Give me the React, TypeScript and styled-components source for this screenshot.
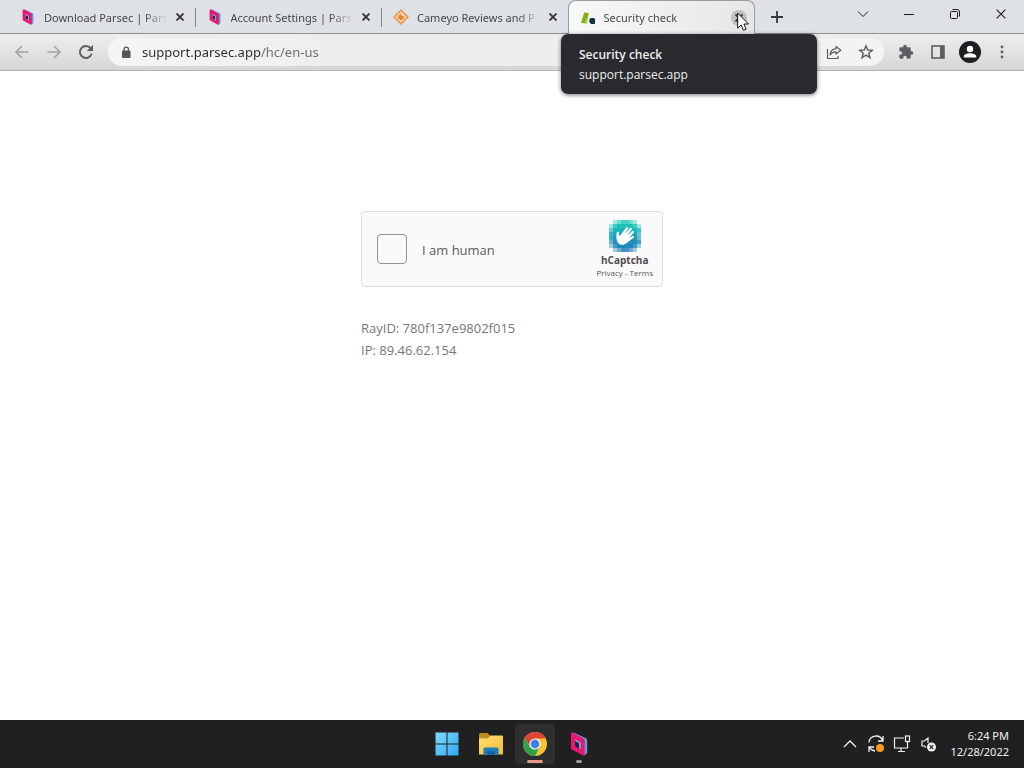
import React from "react";
import styled, { createGlobalStyle } from "styled-components";

const GlobalStyle = createGlobalStyle`
  *, *::before, *::after { box-sizing: border-box; }
  body {
    margin: 0;
    background: #fff;
    font-family: "Open Sans", "Noto Sans", sans-serif;
    font-size: 13px;
    color: #3c4043;
  }
  button, input { font: inherit; color: inherit; }
  svg { display: block; }
`;

const Screen = styled.div`
  min-height: 100vh;
  display: flex;
  flex-direction: column;
`;

const TabStrip = styled.header`
  position: relative;
  display: flex;
  height: 34px;
  padding-left: 8px;
  background: #dee1e6;
  border-bottom: 1px solid #8f8c90;
`;

const TabList = styled.div`
  display: flex;
  flex: 0 1 747px;
  min-width: 0;
`;

const TabItem = styled.div<{ $active?: boolean; $divided?: boolean }>`
  position: relative;
  display: flex;
  align-items: center;
  flex: 1 1 0;
  min-width: 0;
  height: 34px;
  padding: 0 7px 0 ${(p) => (p.$active ? 11 : 12)}px;
  border: 1px solid ${(p) => (p.$active ? "#9b9c9f" : "transparent")};
  border-width: ${(p) => (p.$active ? "1px 1px 0" : "0")};
  border-radius: 8px 8px 0 0;
  background: ${(p) => (p.$active ? "linear-gradient(100deg, #f8f8f8, #e6e6e6)" : "transparent")};

  &::after {
    content: "";
    display: ${(p) => (p.$divided ? "block" : "none")};
    position: absolute;
    right: -1px;
    top: 8px;
    width: 1px;
    height: 19px;
    background: #85878b;
  }
`;

const TabLabel = styled.button`
  display: flex;
  align-items: center;
  flex: 1;
  min-width: 0;
  gap: 8px;
  height: 34px;
  padding: 0;
  border: 0;
  background: none;
  text-align: left;
  font-family: "Noto Sans", sans-serif;
  font-size: 11px;
  color: #45484d;
  svg { flex: none; }
`;

const TabTitle = styled.span`
  flex: 1;
  overflow: hidden;
  white-space: nowrap;
  margin-right: 4px;
  mask-image: linear-gradient(to right, #000 calc(100% - 24px), transparent);
`;

const CloseButton = styled.button<{ $hover?: boolean }>`
  display: grid;
  place-items: center;
  flex: none;
  width: 16px;
  height: 16px;
  padding: 0;
  border: 0;
  border-radius: 50%;
  background: ${(p) => (p.$hover ? "#bfc0c2" : "none")};
  color: #303236;
`;

const NewTab = styled.button`
  display: grid;
  place-items: center;
  width: 28px;
  height: 33px;
  margin-left: 8px;
  padding: 0;
  border: 0;
  background: none;
  color: #35383c;
`;

const WindowControls = styled.div`
  display: flex;
  margin-left: auto;
`;

const WindowButton = styled.button`
  display: grid;
  place-items: center;
  width: 46px;
  height: 28px;
  padding: 0;
  border: 0;
  background: none;
  color: #1b1b1c;
`;

const Toolbar = styled.div`
  display: flex;
  align-items: center;
  height: 37px;
  padding: 0 6px;
  background: linear-gradient(#efeeee, #d6d6d6);
  border-bottom: 1px solid #b4b4b4;
`;

const ToolButton = styled.button<{ $dim?: boolean }>`
  display: grid;
  place-items: center;
  flex: none;
  width: 32px;
  height: 28px;
  padding: 0;
  border: 0;
  background: none;
  color: ${(p) => (p.$dim ? "#a3a3a3" : "#5c5e61")};
`;

const Omnibox = styled.div`
  display: flex;
  align-items: center;
  flex: 1;
  min-width: 0;
  height: 28px;
  margin: 0 6px;
  padding: 0 2px 0 13px;
  border-radius: 14px;
  background: linear-gradient(90deg, #f5f5f5, #efeeee 30%, #efeeee 70%, #f3f3f3);
`;

const Address = styled.input`
  flex: 1;
  min-width: 0;
  height: 28px;
  margin-left: 11px;
  padding: 0;
  border: 0;
  outline: 0;
  font-family: "Noto Sans", sans-serif;
  background: linear-gradient(90deg, #2b2c2f 119px, #696c70 119px);
  background-clip: text;
  color: transparent;
`;

const TabTooltip = styled.div`
  position: absolute;
  z-index: 2;
  left: 561px;
  top: 34px;
  width: 256px;
  padding: 11px 18px 9px;
  border-radius: 7px;
  background: #292a2d;
  box-shadow: 0 1px 4px rgba(0, 0, 0, 0.55);
  color: #eeeef0;
  line-height: 20px;
  font-size: 12px;
`;

const TooltipTitle = styled.div`
  font-weight: 600;
`;

const Pointer = styled.svg`
  position: absolute;
  z-index: 3;
  left: 737px;
  top: 12px;
`;

const Page = styled.main`
  flex: 1;
  padding: 140px 16px 0;
`;

const Challenge = styled.div`
  max-width: 302px;
  margin: 0 auto;
`;

const Widget = styled.div`
  display: flex;
  align-items: center;
  height: 76px;
  padding: 0 9px 0 15px;
  border: 1px solid #e0e0e0;
  border-radius: 4px;
  background: #fafafa;
`;

const Tick = styled.input`
  appearance: none;
  flex: none;
  width: 30px;
  height: 30px;
  margin: 0;
  border: 1px solid #919191;
  border-radius: 4px;
  background: #fafafa;
`;

const HumanLabel = styled.label`
  margin-left: 15px;
  padding-top: 2px;
  flex: 1;
  color: #5c5c5c;
`;

const Brand = styled.div`
  display: flex;
  flex-direction: column;
  align-items: center;
`;

const BrandName = styled.div`
  font-size: 10px;
  line-height: 16px;
  font-weight: 700;
  color: #4d4d4f;
`;

const BrandLinks = styled.div`
  font-size: 8px;
  line-height: 10px;
  color: #555;
  a { color: inherit; text-decoration: none; }
`;

const Details = styled.div`
  margin-top: 30px;
  line-height: 22px;
  color: #75777a;
`;

const Taskbar = styled.footer`
  display: grid;
  grid-template-columns: 1fr auto 1fr;
  align-items: center;
  height: 48px;
  background: #202020;
`;

const AppRow = styled.nav`
  grid-column: 2;
  display: flex;
  gap: 4px;
  padding-left: 2px;
`;

const AppButton = styled.button<{ $active?: boolean; $mark?: string; $wide?: boolean }>`
  position: relative;
  display: grid;
  place-items: center;
  width: 40px;
  height: 40px;
  padding: 0;
  border: 0;
  border-radius: 4px;
  background: ${(p) => (p.$active ? "#2e2e2e" : "none")};

  &::after {
    content: "";
    position: absolute;
    bottom: 1px;
    width: ${(p) => (p.$wide ? 16 : 6)}px;
    height: 3px;
    border-radius: 2px;
    background: ${(p) => p.$mark ?? "transparent"};
  }
`;

const Tray = styled.div`
  display: flex;
  align-items: center;
  justify-content: flex-end;
  padding-right: 15px;
  color: #f2f2f2;
`;

const TrayButton = styled.button`
  display: grid;
  place-items: center;
  width: 26px;
  height: 40px;
  padding: 0;
  border: 0;
  background: none;
`;

const Clock = styled.time`
  margin-left: 9px;
  text-align: right;
  font-family: "Noto Sans", sans-serif;
  font-size: 11px;
  line-height: 16px;
  white-space: nowrap;
`;

const ParsecIcon = ({ size = 16 }: { size?: number }) => (
  <svg width={size} height={size} viewBox="0 0 24 24">
    <path d="M6.500.5 19 6.200c.8.400 1.200 1 1.200 1.800V21l-2.500 2.500L5 3z" fill="#5a9fd4" />
    <path
      fillRule="evenodd"
      d="M5.800.8 16.300 6.500c.9.500 1.400 1.200 1.400 2.200v13.500c0 1.300-.8 1.700-1.900 1.100L5.300 17.700c-.9-.5-1.400-1.200-1.400-2.200V2c0-1.200.8-1.700 1.900-1.200zM8.300 7.500v6.800l5.200 2.900v-6.800z"
      fill="#ec1670"
    />
    <path d="M8.300 7.500 13.500 10.400v6.800l-1.500-.9v-5L8.300 9.200z" fill="#63b3e2" />
    <path d="M8.300 9.200 12 11.300v5l-3.700-2z" fill="#2a1f42" />
  </svg>
);

const CameyoIcon = () => (
  <svg width="16" height="16" viewBox="0 0 16 16">
    <path d="M8 1.200 14.800 8 8 14.800 1.200 8z" fill="#f7dcc2" stroke="#ec9a54" strokeWidth="1.800" />
    <path d="M8 4 8.300 6.600 11 7.200 10.200 10.200 7.800 11.300 5.200 9.200 5.500 7z" fill="#e9822d" />
  </svg>
);

const SecurityIcon = () => (
  <svg width="16" height="16" viewBox="0 0 16 16">
    <path d="M4.200 2.500 8.800 3 6.500 13.500 1 13z" fill="#86b313" />
    <path d="M6.500 8.200 8 9.500 6.800 13.500H5z" fill="#b9d36a" />
    <path d="M9.800 8.300 14 8l1.200 1.500-.4 4.500H11L9.200 11.800z" fill="#12343c" />
  </svg>
);

const Cross = ({ size = 8, weight = 1.8 }: { size?: number; weight?: number }) => (
  <svg width={size} height={size} viewBox="0 0 8 8" stroke="currentColor" strokeWidth={weight}>
    <path d="M.5.5l7 7M7.500.5l-7 7" />
  </svg>
);

const Arrow = ({ flip }: { flip?: boolean }) => (
  <svg width="16" height="16" viewBox="0 0 16 16" fill="none" stroke="currentColor" strokeWidth="1.600">
    <path d={flip ? "M1.500 8h12M8 2 14 8 8 14" : "M14.500 8h-12M8 2 2 8 8 14"} />
  </svg>
);

const Reload = () => (
  <svg width="16" height="16" viewBox="0 0 16 16">
    <path d="M13.600 9.800A6 6 0 1 1 12.600 4.200" fill="none" stroke="currentColor" strokeWidth="1.900" />
    <path d="M15 .8V7H8.800z" fill="currentColor" />
  </svg>
);

const Lock = () => (
  <svg width="10" height="13" viewBox="0 0 10 13">
    <rect x="1" y="4.500" width="8.500" height="7.500" rx="1" fill="#55575a" />
    <path d="M3 5V3.300a2.200 2.200 0 0 1 4.400 0V5" fill="none" stroke="#55575a" strokeWidth="1.300" />
  </svg>
);

const Share = () => (
  <svg width="16" height="16" viewBox="0 0 16 16" fill="none" stroke="currentColor" strokeWidth="1.200">
    <path d="M1.500 5v9.500h10.500v-2.500" />
    <path d="M10 2.500 14.800 6.200 10 10V7.800C7 7.800 5.300 8.800 4 11 4.300 7.500 6.300 5 10 4.600z" strokeLinejoin="round" />
  </svg>
);

const Star = () => (
  <svg width="16" height="16" viewBox="0 0 16 16" fill="none" stroke="currentColor" strokeWidth="1.400">
    <path d="M8 1.800 9.700 6l4.600.3-3.500 2.900 1.200 4.500L8 11.200 4 13.700l1.200-4.500L1.700 6.300 6.300 6z" />
  </svg>
);

const Puzzle = () => (
  <svg width="16" height="16" viewBox="0 0 24 24" fill="currentColor">
    <path d="M20.500 11H19V7a2 2 0 0 0-2-2h-4V3.500a2.500 2.500 0 0 0-5 0V5H4a2 2 0 0 0-2 2v3.800h1.500a2.700 2.700 0 0 1 0 5.400H2V20a2 2 0 0 0 2 2h3.800v-1.500a2.700 2.700 0 0 1 5.400 0V22H17a2 2 0 0 0 2-2v-4h1.500a2.500 2.500 0 0 0 0-5z" />
  </svg>
);

const SidePanel = () => (
  <svg width="14" height="14" viewBox="0 0 14 14">
    <rect x="1" y="1" width="12" height="12" fill="none" stroke="currentColor" strokeWidth="1.600" />
    <path d="M9 1h4v12H9z" fill="currentColor" />
  </svg>
);

const Profile = () => (
  <svg width="22" height="22" viewBox="0 0 22 22">
    <circle cx="11" cy="11" r="11" fill="#1d1e22" />
    <circle cx="11" cy="8" r="3.200" fill="#fff" />
    <path d="M4.800 16.500v-1.300c0-2 3.500-3 6.200-3s6.200 1 6.200 3v1.300z" fill="#fff" />
  </svg>
);

const Dots = () => (
  <svg width="4" height="14" viewBox="0 0 4 14" fill="currentColor">
    <circle cx="2" cy="2" r="1.400" />
    <circle cx="2" cy="7" r="1.400" />
    <circle cx="2" cy="12" r="1.400" />
  </svg>
);

const PIXEL_ROWS = [
  ".dabbad.",
  "dbccccbd",
  "accccccb",
  "bcccccca",
  "bcccccca",
  "accccccb",
  "dbccccbd",
  ".dabbad.",
];
const ROW_COLOURS = ["#25cbb4", "#1fc2b5", "#1bb5bc", "#1aaabd", "#1a9dbd", "#1c92bc", "#2089bc", "#2780be"];
const PIXEL_OPACITY: Record<string, number> = { d: 0.4, a: 0.65, b: 0.85, c: 1 };

const CaptchaLogo = () => (
  <svg width="32" height="32" viewBox="0 0 32 32">
    {PIXEL_ROWS.flatMap((row, y) =>
      row.split("").map((cell, x) =>
        cell === "." ? null : (
          <rect
            key={`${x}-${y}`}
            x={x * 4}
            y={y * 4}
            width="4"
            height="4"
            fill={ROW_COLOURS[y]}
            opacity={PIXEL_OPACITY[cell]}
          />
        )
      )
    )}
    <path
      d="M9.500 23.500C7.500 21 7 17.500 7.600 12.800c.3-1.500 2.100-1.300 2.300.2l.6 3.500 6.700-9c.9-1.200 2.600-.2 1.900 1.100l-3.600 5.700 5.400-6c1-1.100 2.600.1 1.800 1.300l-4.600 6 5.200-4.400c1.100-.9 2.400.5 1.500 1.500l-5 5.200 3.800-1.900c1.200-.5 2.100 1 1 1.700l-6.300 4.800c-3 2.500-6.500 3.300-8.800 1z"
      fill="#fff"
    />
  </svg>
);

const WindowsLogo = () => (
  <svg width="24" height="24" viewBox="0 0 24 24">
    <defs>
      <linearGradient id="win" x1="0" y1="0" x2="24" y2="24" gradientUnits="userSpaceOnUse">
        <stop offset="0" stopColor="#82dcfd" />
        <stop offset="1" stopColor="#2ca7ee" />
      </linearGradient>
    </defs>
    <path d="M.5.5h11v11H.5zM12.500.5h11v11h-11zM.5 12.500h11v11H.5zM12.500 12.500h11v11h-11z" fill="url(#win)" />
  </svg>
);

const FolderIcon = () => (
  <svg width="26" height="24" viewBox="0 0 26 24">
    <defs>
      <linearGradient id="folder" x1="0" y1="0" x2="1" y2="1">
        <stop offset="0" stopColor="#ffdf73" />
        <stop offset="1" stopColor="#f3bd35" />
      </linearGradient>
    </defs>
    <path d="M1 2.500A1.500 1.500 0 0 1 2.500 1h7l2.500 2.500-2.500 3H1z" fill="#c08a1c" />
    <path d="M1 6.200h8.500l2.700-2.700H24a1 1 0 0 1 1 1V22.500H1z" fill="url(#folder)" />
    <path d="M5.500 22.500V17a1.500 1.500 0 0 1 1.500-1.500h12a1.500 1.500 0 0 1 1.500 1.500v5.500z" fill="#1b7cc0" />
    <path d="M9 22.500v-3h8v3z" fill="#115f9e" />
  </svg>
);

const ChromeIcon = () => (
  <svg width="24" height="24" viewBox="0 0 24 24">
    <circle cx="12" cy="12" r="12" fill="#f7c52b" />
    <path d="M12 6.500h10.700A12 12 0 0 0 1.600 6l5.700 9z" fill="#e04436" />
    <path d="M1.600 6A12 12 0 0 0 12 24l4.800-9.300L7.200 15.500z" fill="#2fa04c" />
    <circle cx="12" cy="12" r="5.600" fill="#fff" />
    <circle cx="12" cy="12" r="4.400" fill="#3c7ee8" />
  </svg>
);

const SyncIcon = () => (
  <svg width="18" height="18" viewBox="0 0 18 18" fill="none" stroke="currentColor" strokeWidth="1.300">
    <path d="M2 7.500A7 7 0 0 1 15.500 5.500M16 1v5h-5M2 17v-5h5M2.500 12.500A7 7 0 0 0 8 16" />
    <circle cx="13" cy="13" r="4" fill="#f7981d" stroke="none" />
  </svg>
);

const NetworkIcon = () => (
  <svg width="18" height="18" viewBox="0 0 18 18" fill="none" stroke="currentColor" strokeWidth="1.200">
    <path d="M11 3H1.500v10h13V9M5 16.500h7M8 13v3.500M14.500 6v4" />
    <rect x="12.500" y="1" width="4" height="5.500" />
  </svg>
);

const MutedIcon = () => (
  <svg width="18" height="18" viewBox="0 0 18 18" fill="none" stroke="currentColor" strokeWidth="1.200">
    <path d="M9 8V3L5.500 6H3v5h2.500L7 12.500" />
    <circle cx="12.500" cy="12" r="4.500" fill="currentColor" stroke="none" />
    <path d="M10.700 10.200l3.600 3.600M14.300 10.200l-3.600 3.600" stroke="#202020" />
  </svg>
);

const tabs = [
  { title: "Download Parsec | Pars", icon: <ParsecIcon />, divided: true },
  { title: "Account Settings | Pars", icon: <ParsecIcon />, divided: true },
  { title: "Cameyo Reviews and P", icon: <CameyoIcon /> },
  { title: "Security check", icon: <SecurityIcon />, active: true },
];

export default function App() {
  return (
    <Screen>
      <GlobalStyle />
      <TabStrip>
        <TabList role="tablist">
          {tabs.map((tab) => (
            <TabItem key={tab.title} $active={tab.active} $divided={tab.divided}>
              <TabLabel role="tab" aria-selected={!!tab.active}>
                {tab.icon}
                <TabTitle>{tab.title}</TabTitle>
              </TabLabel>
              <CloseButton aria-label="Close tab" $hover={tab.active}>
                <Cross />
              </CloseButton>
            </TabItem>
          ))}
        </TabList>
        <NewTab aria-label="New tab">
          <svg width="12" height="12" viewBox="0 0 12 12" stroke="currentColor" strokeWidth="1.800">
            <path d="M6 0v12M0 6h12" />
          </svg>
        </NewTab>
        <WindowControls>
          <WindowButton aria-label="Search tabs">
            <svg width="12" height="12" viewBox="0 0 12 12" fill="none" stroke="currentColor">
              <path d="M1 3.500l5 5 5-5" />
            </svg>
          </WindowButton>
          <WindowButton aria-label="Minimize">
            <svg width="10" height="10" viewBox="0 0 10 10" stroke="currentColor">
              <path d="M0 5.500h10" />
            </svg>
          </WindowButton>
          <WindowButton aria-label="Restore">
            <svg width="10" height="10" viewBox="0 0 10 10" fill="none" stroke="currentColor">
              <rect x=".5" y="2.500" width="7" height="7" rx="1" />
              <path d="M2.500.5H7A2.500 2.500 0 0 1 9.500 3v4.500" />
            </svg>
          </WindowButton>
          <WindowButton aria-label="Close">
            <Cross size={10} weight={0.9} />
          </WindowButton>
        </WindowControls>
        <TabTooltip role="tooltip">
          <TooltipTitle>Security check</TooltipTitle>
          <div>support.parsec.app</div>
        </TabTooltip>
        <Pointer width="12" height="20" viewBox="0 0 12 20">
          <path
            d="M.7 1v15.200l3.500-3.300 2.200 5.400 2.700-1.100-2.200-5.200h4.600z"
            fill="#fff"
            stroke="#111"
            strokeWidth="1"
          />
        </Pointer>
      </TabStrip>

      <Toolbar>
        <ToolButton $dim aria-label="Back"><Arrow /></ToolButton>
        <ToolButton $dim aria-label="Forward"><Arrow flip /></ToolButton>
        <ToolButton aria-label="Reload"><Reload /></ToolButton>
        <Omnibox>
          <Lock />
          <Address aria-label="Address" defaultValue="support.parsec.app/hc/en-us" />
          <ToolButton aria-label="Share"><Share /></ToolButton>
          <ToolButton aria-label="Bookmark"><Star /></ToolButton>
        </Omnibox>
        <ToolButton aria-label="Extensions"><Puzzle /></ToolButton>
        <ToolButton aria-label="Side panel"><SidePanel /></ToolButton>
        <ToolButton aria-label="Profile"><Profile /></ToolButton>
        <ToolButton aria-label="Menu"><Dots /></ToolButton>
      </Toolbar>

      <Page>
        <Challenge>
          <Widget>
            <Tick type="checkbox" id="human" />
            <HumanLabel htmlFor="human">I am human</HumanLabel>
            <Brand>
              <CaptchaLogo />
              <BrandName>hCaptcha</BrandName>
              <BrandLinks>
                <a href="#privacy">Privacy</a> - <a href="#terms">Terms</a>
              </BrandLinks>
            </Brand>
          </Widget>
          <Details>
            <div>RayID: 780f137e9802f015</div>
            <div>IP: 89.46.62.154</div>
          </Details>
        </Challenge>
      </Page>

      <Taskbar>
        <AppRow>
          <AppButton aria-label="Start"><WindowsLogo /></AppButton>
          <AppButton aria-label="File Explorer"><FolderIcon /></AppButton>
          <AppButton aria-label="Chrome" $active $wide $mark="#e79a8b"><ChromeIcon /></AppButton>
          <AppButton aria-label="Parsec" $mark="#9a9a9a"><ParsecIcon size={24} /></AppButton>
        </AppRow>
        <Tray>
          <TrayButton aria-label="Show hidden icons">
            <svg width="14" height="14" viewBox="0 0 14 14" fill="none" stroke="currentColor" strokeWidth="1.300">
              <path d="M1 10l6-6 6 6" />
            </svg>
          </TrayButton>
          <TrayButton aria-label="Updates"><SyncIcon /></TrayButton>
          <TrayButton aria-label="Network"><NetworkIcon /></TrayButton>
          <TrayButton aria-label="Sound"><MutedIcon /></TrayButton>
          <Clock>
            <div>6:24 PM</div>
            <div>12/28/2022</div>
          </Clock>
        </Tray>
      </Taskbar>
    </Screen>
  );
}
